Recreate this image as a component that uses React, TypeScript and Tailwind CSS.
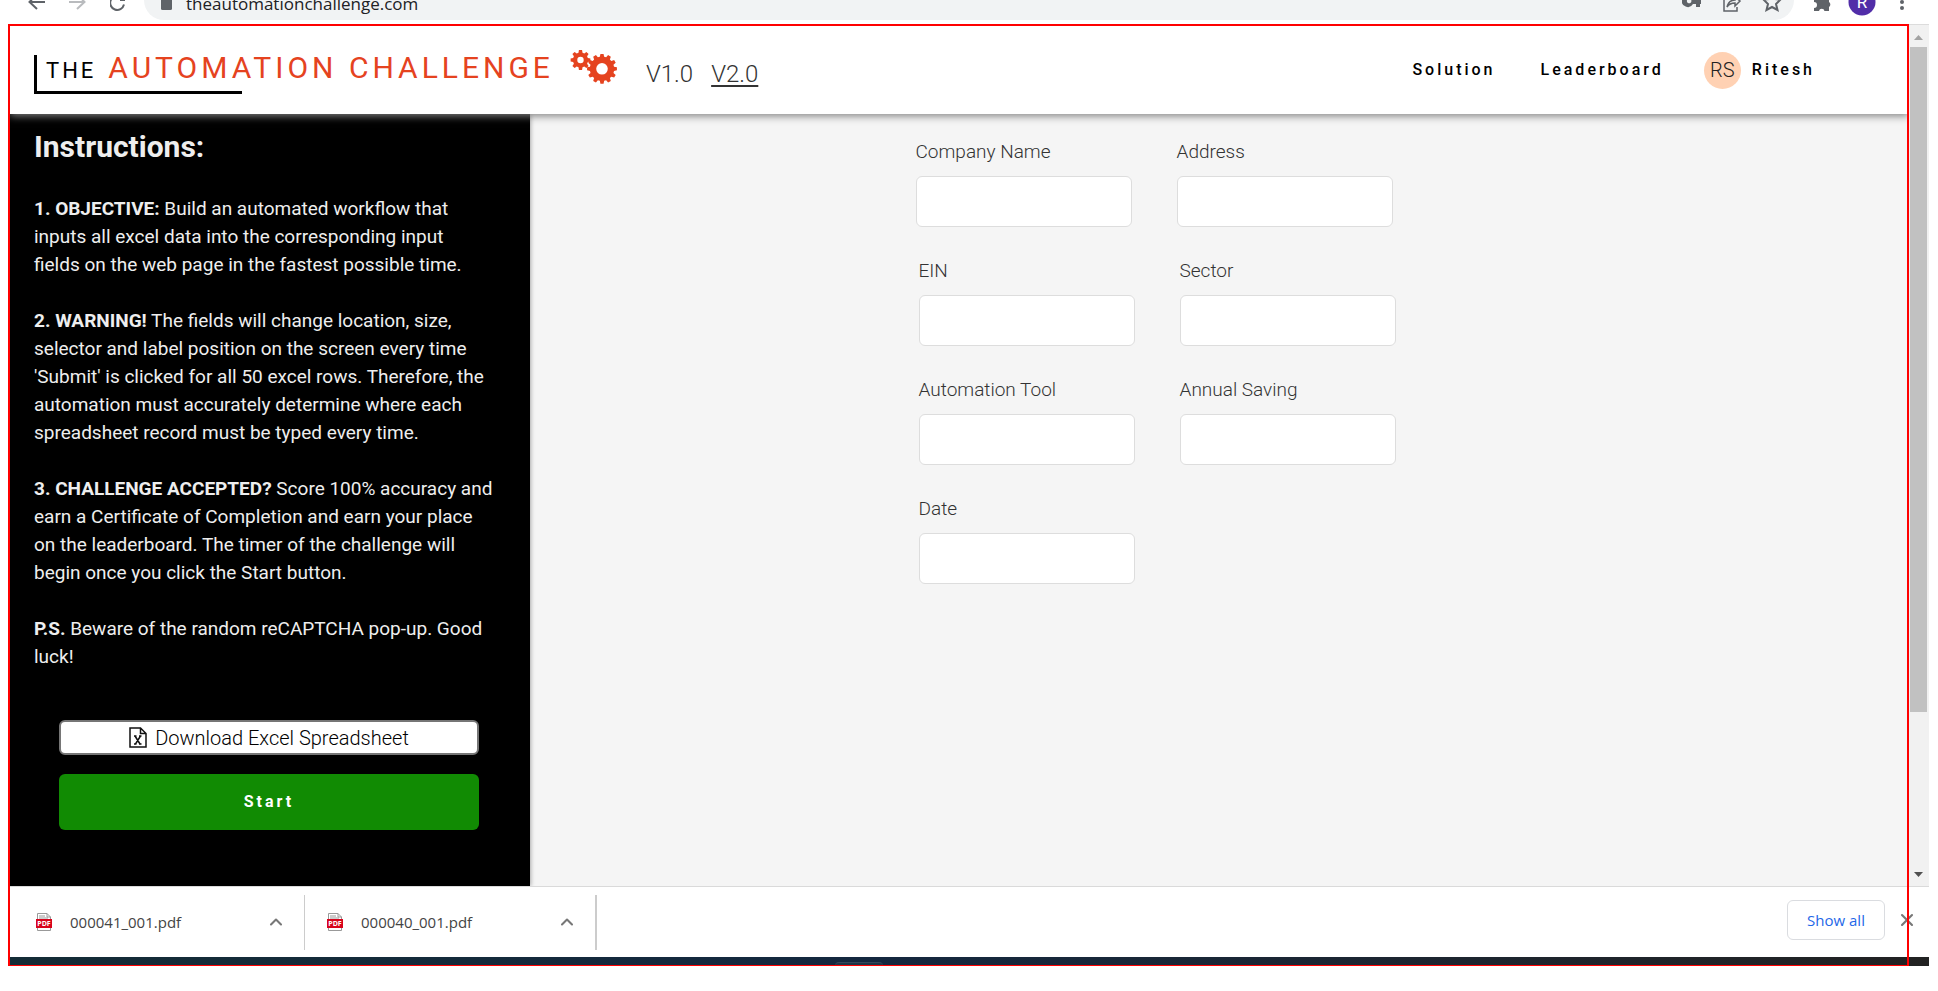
import { ChevronUp, X } from "lucide-react";
import type { ReactNode } from "react";

const steps = [
  { title: "1. OBJECTIVE:", body: "Build an automated workflow that inputs all excel data into the corresponding input fields\u00a0on the web page in the fastest possible time." },
  { title: "2. WARNING!", body: "The fields will change location, size, selector and label position on the screen every time 'Submit' is clicked for all 50 excel rows. Therefore, the automation must accurately determine where each spreadsheet record must be typed every time." },
  { title: "3. CHALLENGE ACCEPTED?", body: "Score 100% accuracy and earn a Certificate of Completion and earn your place on the leaderboard. The timer of the challenge will begin once you click the Start button." },
  { title: "P.S.", body: "Beware of the random reCAPTCHA pop-up. Good luck!" },
];

function gearPath(cx: number, cy: number, outer: number, inner: number, hole: number, teeth: number) {
  const points: string[] = [];
  const step = (Math.PI * 2) / teeth;
  for (let i = 0; i < teeth; i++) {
    const a = i * step - Math.PI / 2;
    const spots: [number, number][] = [
      [inner, -0.34],
      [outer, -0.2],
      [outer, 0.2],
      [inner, 0.34],
    ];
    for (const [r, t] of spots) {
      points.push(`${(cx + r * Math.cos(a + t * step)).toFixed(2)} ${(cy + r * Math.sin(a + t * step)).toFixed(2)}`);
    }
  }
  return `M${points.join("L")}Z M${cx + hole} ${cy}a${hole} ${hole} 0 1 0 ${-2 * hole} 0a${hole} ${hole} 0 1 0 ${2 * hole} 0Z`;
}

function Gears() {
  return (
    <svg width="48" height="36" viewBox="0 0 48 36" fill="#e5431f" fillRule="evenodd" aria-hidden="true">
      <path d={gearPath(10.5, 11, 10, 7.6, 3.2, 8)} />
      <path d={gearPath(32, 19.8, 15, 12.2, 5.8, 12)} />
    </svg>
  );
}

function BrowserBar() {
  return (
    <div className="flex h-6 items-start overflow-hidden text-[#5f6368]">
      <div className="flex w-36 shrink-0 gap-6 pl-7">
        <svg width="17" height="12" viewBox="0 0 17 12" fill="none" stroke="#5f6368" strokeWidth="2" role="img" aria-label="Back">
          <path d="M17 2H2M9 -6L1.500 2L9 9" />
        </svg>
        <svg width="17" height="12" viewBox="0 0 17 12" fill="none" stroke="#b9bbbe" strokeWidth="2" role="img" aria-label="Forward">
          <path d="M0 2H15M8 -6L15.500 2L8 9" />
        </svg>
        <svg width="17" height="12" viewBox="0 0 17 12" fill="none" stroke="#5f6368" strokeWidth="2" role="img" aria-label="Reload">
          <path d="M14 4.500A7 7 0 1 1 11 -3M10 0H15" />
        </svg>
      </div>
      <div className="flex h-5 min-w-0 flex-1 items-start rounded-b-[20px] bg-[#f1f3f4] pr-3 pl-4">
        <svg className="mr-3.5 shrink-0" width="12" height="11" viewBox="0 0 12 11" fill="#5f6368" aria-hidden="true">
          <rect x="1" y="-2" width="11" height="12" rx="1.500" />
        </svg>
        <span className="-mt-2 flex-1 font-['Open_Sans',sans-serif] text-[17px] leading-6 text-[#202124]">theautomationchallenge.com</span>
        <div className="flex gap-5">
          <svg width="20" height="13" viewBox="0 0 20 13" fill="#5f6368" aria-hidden="true">
            <path fillRule="evenodd" d="M6 -5a6 6 0 1 0 5 9h3v3h4v-3h1v-4h-8A6 6 0 0 0 6 -5ZM6 -1a2.300 2.300 0 1 1 0 4a2.300 2.300 0 0 1 0-4Z" />
          </svg>
          <svg width="20" height="13" viewBox="0 0 20 13" fill="none" stroke="#5f6368" strokeWidth="1.500" aria-hidden="true">
            <path d="M2 -2V11H15V7M5 7C6 3 9 0 13 0V-3L18 1L13 6V3C9 3 7 4 5 7Z" />
          </svg>
          <svg width="20" height="13" viewBox="0 0 20 13" fill="none" stroke="#5f6368" strokeWidth="2" aria-hidden="true">
            <path d="M10 -7L12.500 -1L18.500 -.5L14 4L15.500 10L10 7L4.500 10L6 4L1.500 -.5L7.500 -1Z" />
          </svg>
        </div>
      </div>
      <div className="flex w-[135px] shrink-0 items-start pl-5">
        <svg width="18" height="13" viewBox="0 0 18 13" fill="#5f6368" aria-hidden="true">
          <path d="M0 -3H15V2a3 3 0 0 1 0 5V11H10.500a2.800 2.800 0 0 0-5.500 0H0V8a3 3 0 0 0 0-6Z" />
        </svg>
        <svg className="ml-4" width="28" height="16" viewBox="0 0 28 16" role="img" aria-label="Profile R">
          <circle cx="14" cy="2" r="13.500" fill="#512da8" />
          <text x="14" y="8" textAnchor="middle" fill="#fff" fontSize="17" fontFamily="Roboto, sans-serif">R</text>
        </svg>
        <svg className="ml-6" width="4" height="12" viewBox="0 0 4 12" fill="#5f6368" aria-hidden="true">
          <circle cx="2" cy="2" r="2" />
          <circle cx="2" cy="8" r="2" />
        </svg>
      </div>
    </div>
  );
}

function Header() {
  return (
    <header className="relative z-10 flex h-[88px] items-center bg-white pr-[94px] pl-6 shadow-[0_2px_8px_#808080]">
      <div className="relative mt-2 flex h-10 items-baseline pl-3 whitespace-nowrap">
        <span className="absolute bottom-0 left-0 h-[39px] w-52 border-b-3 border-l-3 border-black" />
        <span className="text-[22px] leading-7 tracking-[3px] text-black">THE</span>
        <span className="ml-3 text-[30px] leading-7 tracking-[4px] text-[#e5431f]">AUTOMATION CHALLENGE</span>
      </div>
      <div className="-mt-1.5 ml-4 shrink-0"><Gears /></div>
      <nav className="mt-2 ml-7 flex gap-[18px] text-[24px] leading-8 font-light text-[#333]">
        <a href="#v1">V1.0</a>
        <a href="#v2" className="underline decoration-2 underline-offset-3">V2.0</a>
      </nav>
      <nav className="ml-auto flex items-center text-[16px] leading-6 font-medium tracking-[3px] text-black">
        <a href="#solution">Solution</a>
        <a href="#leaderboard" className="ml-[45px]">Leaderboard</a>
        <a href="#profile" className="ml-10 flex items-center gap-[11px]">
          <span className="flex size-[37px] items-center justify-center rounded-full bg-[#ffd1b3] text-xl font-light tracking-normal text-[#222]">RS</span>
          <span>Ritesh</span>
        </a>
      </nav>
    </header>
  );
}

function ExcelIcon() {
  return (
    <svg width="18" height="21" viewBox="0 0 18 21" fill="none" stroke="#111" strokeWidth="1.500" aria-hidden="true">
      <path d="M1 1H11.500L17 6.500V20H1ZM11.500 1V6.500H17" />
      <path d="M6 9L11 17M11.500 9L6.500 17M5 9H7.500M10 9H12.500M5 17H7.500M10 17H12.500" />
    </svg>
  );
}

function Sidebar() {
  return (
    <aside className="z-[1] w-[520px] shrink-0 bg-black pt-[17px] pl-6 text-[#eee] shadow-[1px_0_4px_rgba(0,0,0,0.3)]">
      <h1 className="text-[30px] leading-8 font-bold">Instructions:</h1>
      <div className="mt-8 flex w-[460px] flex-col gap-7 text-[19px] leading-7">
        {steps.map((step) => (
          <p key={step.title}>
            <strong className="font-bold">{step.title}</strong> {step.body}
          </p>
        ))}
      </div>
      <div className="mt-[49px] ml-[25px] flex w-[420px] flex-col gap-[19px]">
        <button type="button" className="flex h-[35px] items-center justify-center gap-2 rounded-md border-2 border-[#767676] bg-white text-[20px] leading-6 font-light text-black">
          <ExcelIcon />
          Download Excel Spreadsheet
        </button>
        <button type="button" className="h-14 rounded-md bg-[#118b03] text-[16px] leading-6 font-bold tracking-[3px] text-white">Start</button>
      </div>
    </aside>
  );
}

function Field({ label }: { label: string }) {
  const id = label.toLowerCase().replace(" ", "-");
  return (
    <div className="flex w-[216px] flex-col gap-3">
      <label htmlFor={id} className="text-[19px] leading-6 font-light text-[#333]">{label}</label>
      <input id={id} type="text" className="h-[51px] rounded-md border border-[#ddd] bg-white px-3 text-lg" />
    </div>
  );
}

function FieldRow({ children }: { children: ReactNode }) {
  return <div className="flex gap-[45px]">{children}</div>;
}

function ChallengeForm() {
  return (
    <main className="flex flex-1 justify-center bg-[#f5f5f5] pt-[26px]">
      <form className="mr-[128px] flex flex-col gap-8">
        <FieldRow>
          <Field label="Company Name" />
          <Field label="Address" />
        </FieldRow>
        <div className="flex flex-col gap-8 pl-[3px]">
          <FieldRow>
            <Field label="EIN" />
            <Field label="Sector" />
          </FieldRow>
          <FieldRow>
            <Field label="Automation Tool" />
            <Field label="Annual Saving" />
          </FieldRow>
          <FieldRow>
            <Field label="Date" />
          </FieldRow>
        </div>
      </form>
    </main>
  );
}

function Scrollbar() {
  return (
    <div className="flex w-5 shrink-0 flex-col items-center border-t border-[#dcdcdc] bg-[#f1f1f1] pr-px" aria-hidden="true">
      <svg className="mt-[10px] mb-[7px] shrink-0" width="9" height="5" viewBox="0 0 9 5" fill="#a3a3a3"><path d="M0 5L4.500 0L9 5Z" /></svg>
      <div className="h-[665px] w-[17px] bg-[#c1c1c1]" />
      <svg className="mt-auto mb-[9px] shrink-0" width="9" height="5" viewBox="0 0 9 5" fill="#505050"><path d="M0 0L4.500 5L9 0Z" /></svg>
    </div>
  );
}

function PdfIcon() {
  return (
    <svg width="16" height="18" viewBox="0 0 16 18" aria-hidden="true">
      <path d="M1.500 .5H11L14.500 4V17.500H1.500Z" fill="#fff" stroke="#999" />
      <path d="M11 .5V4H14.500M3 3H9M3 5H12" fill="none" stroke="#999" />
      <rect y="6" width="16" height="9" fill="#d8041c" />
      <text x="8" y="13" textAnchor="middle" fill="#fff" fontSize="7" fontWeight="700" fontFamily="Open Sans, sans-serif">PDF</text>
    </svg>
  );
}

function Download({ name }: { name: string }) {
  return (
    <div className="flex w-[291px] items-center border-r border-[#ccc] pr-[18px] pl-[22px]">
      <PdfIcon />
      <span className="ml-[18px]">{name}</span>
      <button type="button" aria-label={`Options for ${name}`} className="ml-auto"><ChevronUp size={20} strokeWidth={2.5} color="#777" /></button>
    </div>
  );
}

function DownloadShelf() {
  return (
    <div className="flex h-[71px] items-center border-t border-[#dadada] bg-white pr-3 pl-[6px] font-['Open_Sans',sans-serif] text-[15px] leading-6 text-[#444]">
      <div className="flex h-[55px] border-r border-[#ccc]">
        <Download name="000041_001.pdf" />
        <Download name="000040_001.pdf" />
      </div>
      <button type="button" className="mb-1 ml-auto h-10 w-[98px] rounded-md border border-[#dadce0] text-[15px] text-[#1f68e8]">Show all</button>
      <button type="button" aria-label="Close downloads" className="mb-1 ml-3"><X size={20} strokeWidth={2.5} color="#777" /></button>
    </div>
  );
}

export default function App() {
  return (
    <div className="relative min-h-screen bg-white pr-[9px] pb-[25px] font-['Roboto',sans-serif]">
      <BrowserBar />
      <div className="ml-2 flex flex-col">
        <div className="flex">
          <div className="flex min-w-0 flex-1 flex-col overflow-hidden pt-0.5 pl-0.5">
            <Header />
            <div className="flex min-h-[772px]">
              <Sidebar />
              <ChallengeForm />
            </div>
          </div>
          <Scrollbar />
        </div>
        <DownloadShelf />
        <div className="flex h-[9px] items-end justify-center bg-linear-to-r from-[#142c36] via-[#14283f] via-45% to-[#222]">
          <span className="mr-[220px] h-1 w-12 rounded-t-sm border-t border-[#33475a] bg-[#1d3547]" />
        </div>
      </div>
      <div className="pointer-events-none absolute top-6 right-[29px] bottom-[25px] left-2 z-20 border-2 border-b border-[#f00]" />
    </div>
  );
}
